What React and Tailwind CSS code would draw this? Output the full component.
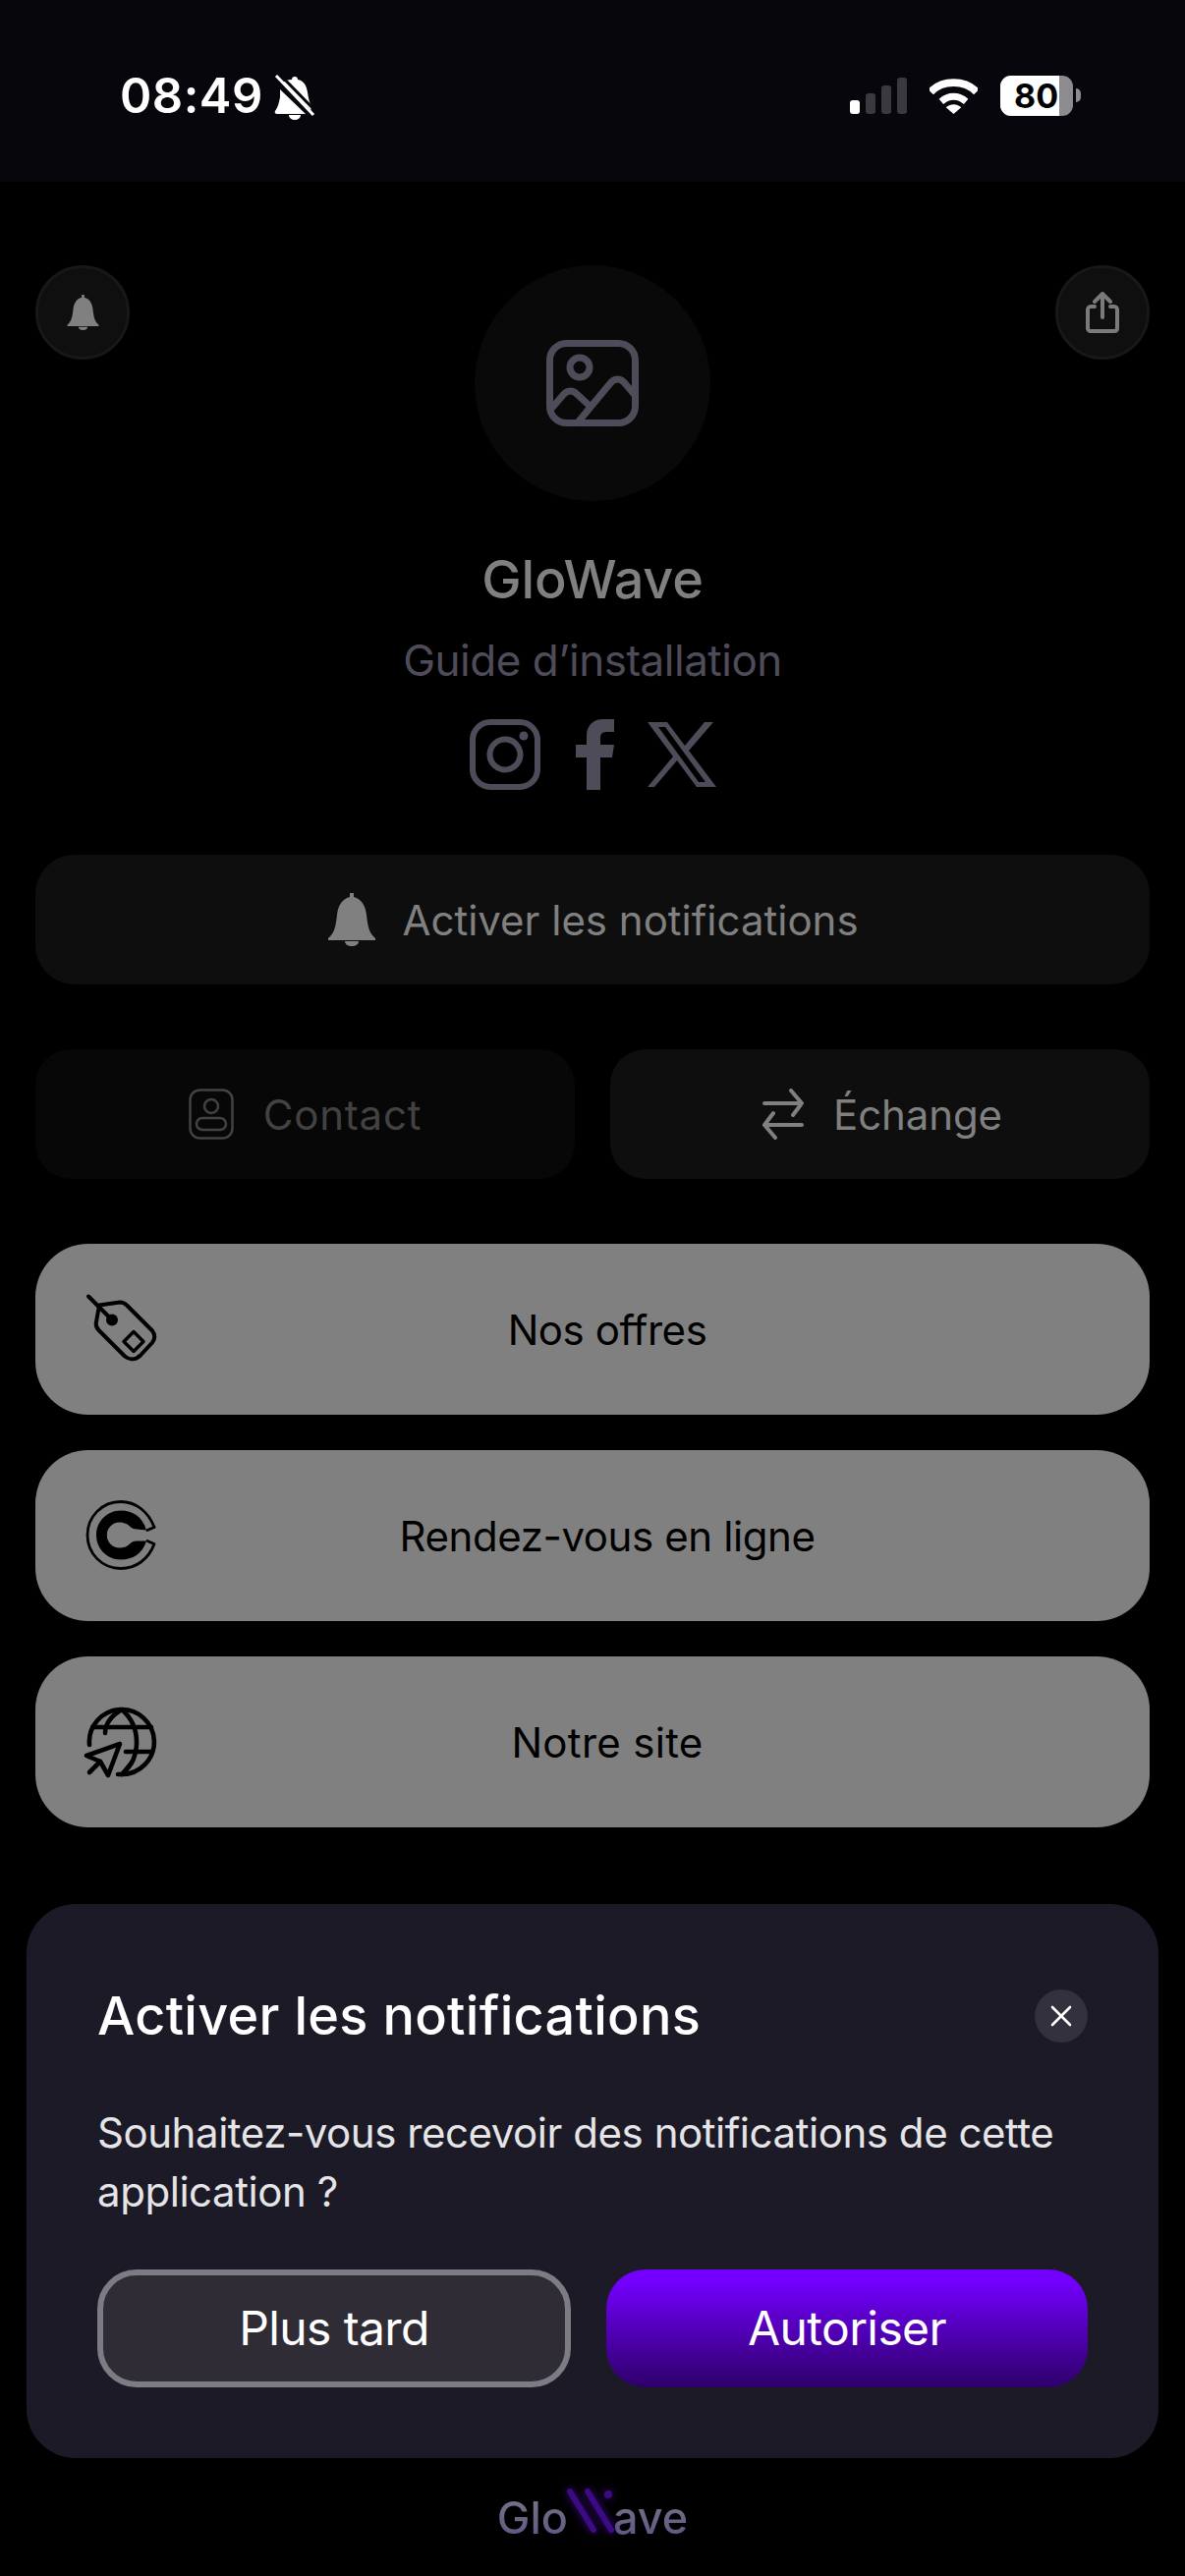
import React from "react";

const font = { fontFamily: "Inter, 'Noto Sans', sans-serif" };

const SolidBell = ({ className }) => (
  <svg viewBox="0 0 52 54" className={className} fill="currentColor">
    <path d="M24 0h4v4c8 2 12 9 13 18 1 9 2 16 6 21l3 3v2H2v-2l3-3c4-5 5-12 6-21C12 13 16 6 24 4V0z" />
    <path d="M19 49h14c0 3-3 5-7 5s-7-2-7-5z" />
  </svg>
);

const StatusBar = () => (
  <div className="h-[185px] bg-[#07060c] flex items-start justify-between pt-[68px] pl-[122px] pr-[106px] text-white">
    <div className="flex items-center gap-[11px]">
      <span className="text-[49px] leading-[60px] font-semibold tracking-[0.5px]" style={font}>08:49</span>
      <svg viewBox="0 0 42 46" className="w-[42px] h-[46px] mt-[2px]" fill="white">
        <path d="M21 2c2 0 3 1 3 3 6 1 9 6 10 13 1 6 2 12 5 15l-2 3L9 8c2-2 5-3 9-3 0-2 1-3 3-3z" />
        <path d="M6 15l26 25H3c-2 0-3-2-2-3 3-4 4-9 5-14v-8z" />
        <path d="M15 41h12c0 3-3 5-6 5s-6-2-6-5z" />
        <path d="M2 1l38 40" stroke="white" strokeWidth="3" />
        <path d="M6 0l37 38" stroke="#07060c" strokeWidth="3" />
      </svg>
    </div>
    <div className="flex items-center gap-[23px] h-[60px]">
      <div className="flex items-end gap-[6px] h-[37px] mt-[-2px]">
        <span className="w-[10px] h-[14px] rounded-[3px] bg-white" />
        <span className="w-[10px] h-[21px] rounded-[3px] bg-[#3a393d]" />
        <span className="w-[10px] h-[29px] rounded-[3px] bg-[#3a393d]" />
        <span className="w-[10px] h-[37px] rounded-[3px] bg-[#3a393d]" />
      </div>
      <svg viewBox="0 0 50 38" className="w-[49px] h-[37px] mt-[-2px]">
        <path d="M1 15C13 2 37 2 49 15" fill="none" stroke="white" strokeWidth="8" />
        <path d="M12 25c8-7 18-7 26 0" fill="none" stroke="white" strokeWidth="7" />
        <path d="M17 31c5-4 11-4 16 0l-8 7z" fill="white" />
      </svg>
      <div className="flex items-center gap-[3px] mt-[-2px]">
        <div className="relative w-[74px] h-[41px] rounded-[11px] overflow-hidden bg-[#8c8b8e] flex">
          <div className="w-[60px] bg-white" />
          <span className="absolute left-[14px] top-0 text-[34px] leading-[41px] font-bold text-black" style={font}>80</span>
        </div>
        <span className="w-[5px] h-[14px] rounded-r-full bg-[#8c8b8e]" />
      </div>
    </div>
  </div>
);

const Header = () => (
  <div className="flex flex-col items-center pt-[85px]">
    <div className="w-full px-[36px] flex justify-between items-start">
      <div className="w-[96px] h-[96px] rounded-full bg-[#0f0f0f] border-[3px] border-[#181818] flex items-center justify-center text-[#808080]">
        <SolidBell className="w-[35px] h-[36px]" />
      </div>
      <div className="w-[240px] h-[240px] rounded-full bg-[#090909] flex items-center justify-center">
        <svg viewBox="0 0 94 88" className="w-[94px] h-[88px]" fill="none" stroke="#4f4c5a" strokeWidth="7" strokeLinejoin="round" strokeLinecap="round">
          <rect x="3.5" y="3.5" width="87" height="81" rx="17" />
          <circle cx="34" cy="28" r="10" />
          <path d="M5 70l13-15c4-4 9-4 13 0l13 12" />
          <path d="M32 84l34-41c4-4 9-4 13 0l11 13" />
        </svg>
      </div>
      <div className="w-[96px] h-[96px] rounded-full bg-[#0f0f0f] border-[3px] border-[#181818] flex items-center justify-center">
        <svg viewBox="0 0 34 42" className="w-[34px] h-[42px]" fill="none" stroke="#7a7a7a" strokeWidth="4" strokeLinejoin="round" strokeLinecap="round">
          <path d="M9 15H5c-1.500 0-3 1.500-3 3v19c0 2 1.500 3 3 3h24c2 0 3-1 3-3V18c0-1.500-1.500-3-3-3h-4" />
          <path d="M17 26V3M9 10l8-8 8 8" />
        </svg>
      </div>
    </div>
    <h1 className="mt-[45px] h-[70px] text-[54px] leading-[70px] font-medium text-[#808080] tracking-[-0.2px]" style={font}>GloWave</h1>
    <p className="mt-[19px] h-[56px] text-[44px] leading-[56px] text-[#4f4c5a] tracking-[-0.5px]" style={font}>Guide d’installation</p>
    <div className="mt-[32px] h-[72px] flex items-center">
      <svg viewBox="0 0 72 72" className="w-[72px] h-[72px]" fill="none" stroke="#4f4c5a" strokeWidth="6">
        <rect x="3" y="3" width="66" height="66" rx="18" />
        <circle cx="36" cy="36" r="15.500" />
        <circle cx="55" cy="17" r="4.500" fill="#4f4c5a" stroke="none" />
      </svg>
      <svg viewBox="0 0 39 72" className="w-[39px] h-[72px] ml-[36px]" fill="#4f4c5a">
        <path d="M11 72V39H0V26h11v-9C11 6 18 0 28 0h11v13h-7c-5 0-7 2-7 6v7h14l-2 13H25v33z" />
      </svg>
      <svg viewBox="0 0 70 66" className="w-[70px] h-[66px] ml-[34px]" fill="#4f4c5a" fillRule="evenodd">
        <path d="M0 0h20l18 24L58 0h9L42 29l28 37H50L30 39 7 66H0l26-31zM11 5l41 56h7L18 5z" />
      </svg>
    </div>
  </div>
);

const ActionButtons = () => (
  <div className="px-[36px] flex flex-col gap-[66px] mt-[66px]">
    <button className="h-[132px] rounded-[40px] bg-[#0e0e0e] flex items-center justify-center gap-[25px] text-[#808080]">
      <SolidBell className="w-[52px] h-[54px]" />
      <span className="text-[42px]" style={font}>Activer les notifications</span>
    </button>
    <div className="grid grid-cols-2 gap-[36px]">
      <button className="h-[132px] rounded-[36px] bg-[#070707] flex items-center justify-center gap-[30px] text-[#424242]">
        <svg viewBox="0 0 46 52" className="w-[46px] h-[52px]" fill="none" stroke="#424242" strokeWidth="2.500">
          <rect x="1.500" y="1.500" width="43" height="49" rx="10" />
          <circle cx="23" cy="18" r="7" />
          <rect x="8" y="30" width="30" height="12" rx="6" />
        </svg>
        <span className="text-[42px] tracking-[0.8px]" style={font}>Contact</span>
      </button>
      <button className="h-[132px] rounded-[36px] bg-[#0e0e0e] pl-[5px] flex items-center justify-center gap-[30px] text-[#808080]">
        <svg viewBox="0 0 42 52" className="w-[42px] h-[52px]" fill="none" stroke="#808080" strokeWidth="4" strokeLinecap="round" strokeLinejoin="round">
          <path d="M2 15h38L29 2M40 15 L31 27" />
          <path d="M40 37H2L13 50M2 37l9-12" />
        </svg>
        <span className="text-[42px] tracking-[-0.1px]" style={font}>Échange</span>
      </button>
    </div>
  </div>
);

const TagIcon = () => (
  <svg viewBox="0 0 73 73" className="w-[73px] h-[73px] absolute left-[51px] top-1/2 -translate-y-1/2" fill="none" stroke="black" strokeWidth="4" strokeLinecap="round" strokeLinejoin="round">
    <path d="M3 3l24 24" />
    <circle cx="27" cy="27" r="6" fill="black" stroke="none" />
    <path d="M14 12l21-3c3 0 5 1 7 3l26 26c3 4 3 8 0 12L56 63c-5 5-11 5-16 1L14 38c-2-2-4-5-3-9z" />
    <path d="M49 39l10 10-10 10-10-10z" strokeWidth="3.500" />
  </svg>
);

const CoinIcon = () => (
  <svg viewBox="0 0 73 73" className="w-[73px] h-[73px] absolute left-[51px] top-1/2 -translate-y-1/2" fill="none">
    <path d="M70 28C64 12 51 2 36 2 17 2 2 17 2 36s15 34 34 34c15 0 28-9 34-25l-7-3" stroke="black" strokeWidth="2.800" strokeLinecap="round" strokeLinejoin="round" />
    <path d="M70 28l-7 3" stroke="black" strokeWidth="2.800" strokeLinecap="round" />
    <path d="M62 31C58 17 48 11 36 11 22 11 11 22 11 36s11 25 25 25c12 0 22-6 26-19H52c-3 0-5 1-7 3-3 3-7 4-10 4-8 0-13-6-13-13s5-13 13-13c3 0 7 1 10 4 2 2 4 3 7 3z" fill="black" />
    <path d="M62 33H52c-3 0-6-1-8-4-3-3-6-4-9-4-7 0-12 5-12 11s5 11 12 11c3 0 6-1 9-4 2-3 5-4 8-4h10" stroke="#808080" strokeWidth="2.400" />
  </svg>
);

const GlobeIcon = () => (
  <svg viewBox="0 0 90 90" className="w-[90px] h-[90px] absolute left-[44px] top-1/2 -translate-y-1/2" fill="none" stroke="black" strokeWidth="4.600" strokeLinecap="round" strokeLinejoin="round">
    <path d="M11 48A33 33 0 1 1 44 78h-4" />
    <path d="M14 30h60" />
    <path d="M27 36c0-10 7-18 17-24 9 8 15 19 15 33 0 14-4 23-15 33" />
    <path d="M48 55h27" />
    <path d="M54 66c-2 3-5 6-8 10" />
    <path d="M8 59l34-12-12 32-8-14z" />
    <path d="M22 65L11 76" />
  </svg>
);

const LinkButton = ({ icon, label, textClass }) => (
  <button className="relative h-[174px] rounded-[54px] bg-[#808080] pl-[30px] flex items-center justify-center">
    {icon}
    <span className={textClass} style={font}>{label}</span>
  </button>
);

const Links = () => (
  <div className="px-[36px] mt-[66px] flex flex-col gap-[36px]">
    <LinkButton icon={<TagIcon />} label="Nos offres" textClass="text-[42px] text-black tracking-[-0.45px]" />
    <LinkButton icon={<CoinIcon />} label="Rendez-vous en ligne" textClass="text-[42px] text-black tracking-[-0.4px]" />
    <LinkButton icon={<GlobeIcon />} label="Notre site" textClass="text-[42px] text-black tracking-[0.3px]" />
  </div>
);

const NotificationSheet = () => (
  <div className="mx-[27px] mt-[78px] h-[564px] rounded-[50px] bg-[#1c1a26] px-[72px] pt-[87px]">
    <div className="flex items-center justify-between h-[54px]">
      <h2 className="text-[54px] leading-[54px] font-medium text-white tracking-[0.3px]" style={font}>Activer les notifications</h2>
      <button className="w-[54px] h-[54px] rounded-full bg-[#33313d] flex items-center justify-center">
        <svg viewBox="0 0 24 24" className="w-[24px] h-[24px]" fill="none" stroke="white" strokeWidth="2.600" strokeLinecap="round">
          <path d="M3 3l18 18M21 3L3 21" />
        </svg>
      </button>
    </div>
    <p className="mt-[62px] text-[42px] leading-[60px] text-[#e5e5e7] tracking-[-0.45px]" style={font}>
      Souhaitez-vous recevoir des notifications de cette application ?
    </p>
    <div className="mt-[49px] flex gap-[36px]">
      <button className="w-[482px] h-[120px] rounded-[40px] border-[6px] border-[#7d7b84] bg-[#2f2c36] text-[48px] text-white tracking-[-0.6px]" style={font}>Plus tard</button>
      <button className="flex-1 h-[120px] rounded-[40px] bg-gradient-to-b from-[#7300ff] from-10% to-[#2f006b] text-[48px] text-white tracking-[-0.6px]" style={font}>Autoriser</button>
    </div>
  </div>
);

const Footer = () => (
  <div className="flex justify-center mt-[31px]">
    <div className="relative flex items-center h-[60px] text-[45px] leading-[60px] font-medium" style={font}>
      <span className="text-transparent bg-clip-text bg-gradient-to-b from-[#7b7a84] to-[#5c4f84]">Glo</span>
      <svg viewBox="0 0 50 46" className="w-[50px] h-[46px] mt-[-14px] mx-[-2px] drop-shadow-[0_0_4px_#3d0a85]" fill="none" stroke="#3d0a85" strokeWidth="6" strokeLinecap="round">
        <path d="M4 3l24 39M22 3l24 39" />
        <circle cx="43" cy="6" r="4" fill="#3d0a85" stroke="none" />
      </svg>
      <span className="text-transparent bg-clip-text bg-gradient-to-b from-[#7b7a84] to-[#5c4f84]">ave</span>
    </div>
  </div>
);

export default function App() {
  return (
    <div className="w-[1206px] h-[2622px] bg-black overflow-hidden">
      <StatusBar />
      <Header />
      <ActionButtons />
      <Links />
      <NotificationSheet />
      <Footer />
    </div>
  );
}
